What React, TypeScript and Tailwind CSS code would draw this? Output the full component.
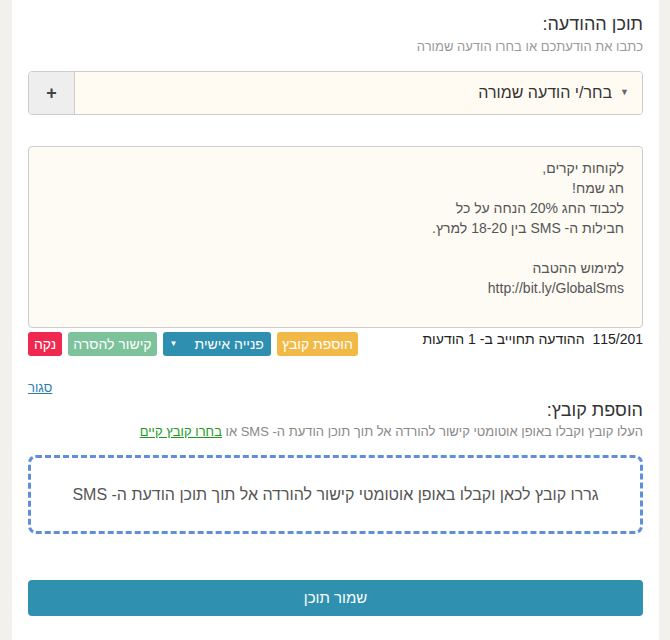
export default function App() {
    return (
        <div
            className="min-h-[640px] bg-[#f2f1ed] pl-3 pr-[11px]"
            style={{ fontFamily: '"Liberation Sans", Arial, "DejaVu Sans", sans-serif' }}
        >
            <div dir="rtl" className="min-h-[640px] bg-white px-4 pt-[13px] pb-6 text-[#333]">
                {/* message content */}
                <h2 className="text-[18px] leading-[22px]">תוכן ההודעה:</h2>
                <p className="mt-[3px] text-[13px] leading-[18px] text-[#999]">
                    כתבו את הודעתכם או בחרו הודעה שמורה
                </p>

                <div className="mt-[15px] flex h-[44px] overflow-hidden rounded border border-[#ccc]">
                    <div className="flex flex-1 items-center bg-[#fffbf3] pr-[13px] text-[16px]">
                        <span className="ml-[8px] text-[9px] text-[#666]">▼</span>
                        בחר/י הודעה שמורה
                    </div>
                    <div className="flex w-[46px] items-center justify-center border-r border-[#ccc] bg-[#eee] text-[18px] font-bold text-[#444]">
                        +
                    </div>
                </div>

                <div className="mt-[31px] h-[182px] rounded border border-[#ccc] bg-[#fdfbf4] pr-[18px] pt-[11px] text-[14px] leading-[20px] text-[#555]">
                    <div>לקוחות יקרים,</div>
                    <div>חג שמח!</div>
                    <div>לכבוד החג 20% הנחה על כל</div>
                    <div>חבילות ה- SMS בין 18-20 למרץ.</div>
                    <div>&nbsp;</div>
                    <div>למימוש ההטבה</div>
                    <div>http://bit.ly/GlobalSms</div>
                </div>

                <div className="mt-[4px] flex items-start justify-between">
                    <div className="-mt-[2px] text-[14px] leading-[18px] text-[#222]">
                        115/201&nbsp; ההודעה תחוייב ב- 1 הודעות
                    </div>
                    <div className="flex gap-[6px] text-[14px] leading-[24px] text-white">
                        <button className="h-[24px] rounded-[3px] bg-[#f2b947] px-[5px]">הוספת קובץ</button>
                        <button className="flex h-[24px] items-center rounded-[3px] bg-[#2f8fb1] px-[7px]">
                            <span>פנייה אישית</span>
                            <span className="mr-[17px] text-[8px]">▼</span>
                        </button>
                        <button className="h-[24px] rounded-[3px] bg-[#7cc29b] px-[5px]">קישור להסרה</button>
                        <button className="h-[24px] rounded-[3px] bg-[#f0274e] px-[6px]">נקה</button>
                    </div>
                </div>

                {/* file attachment */}
                <div className="mt-[24px] flex justify-end">
                    <a href="#" className="text-[13px] leading-[16px] text-[#2a7fae] underline">סגור</a>
                </div>
                <h2 className="mt-[3px] text-[18px] leading-[22px]">הוספת קובץ:</h2>
                <p className="mt-[2px] text-[13px] leading-[18px] text-[#888]">
                    העלו קובץ וקבלו באופן אוטומטי קישור להורדה אל תוך תוכן הודעת ה- SMS או{" "}
                    <a href="#" className="text-[#1d9a1d] underline">בחרו קובץ קיים</a>
                </p>

                <div className="mt-[14px] flex h-[79px] items-center justify-center rounded-[8px] border-[3px] border-dashed border-[#5f8fdb] text-[16px] text-[#555]">
                    גררו קובץ לכאן וקבלו באופן אוטומטי קישור להורדה אל תוך תוכן הודעת ה- SMS
                </div>

                <button className="mt-[46px] flex h-[36px] w-full items-center justify-center rounded bg-[#2f90b0] text-[15px] text-white">
                    שמור תוכן
                </button>
            </div>
        </div>
    );
}
